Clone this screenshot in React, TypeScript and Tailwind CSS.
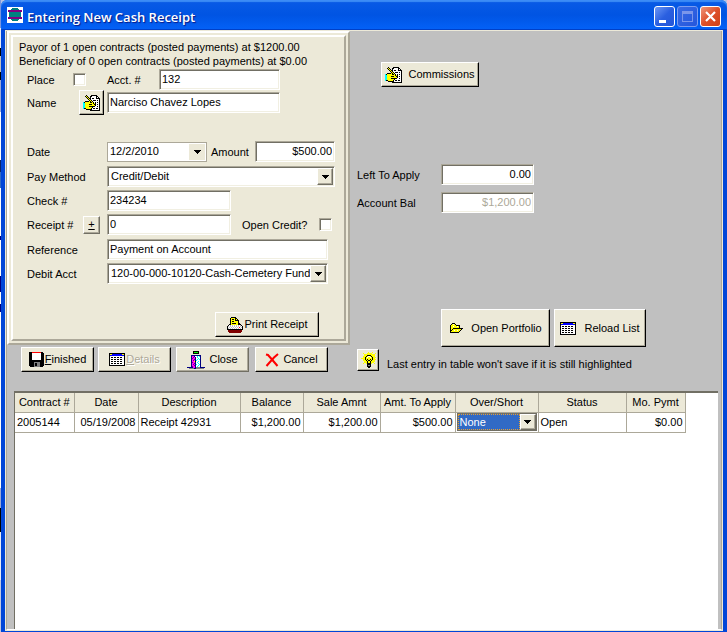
import { useState } from 'react'
import type { ReactNode } from 'react'
import clsx from 'clsx'

const raised = "border border-t-white border-l-white border-r-black border-b-black bg-[#ece9d8] shadow-[inset_-1px_-1px_0_#aca899]"
const raisedSoft = "border border-t-white border-l-white border-r-[#716f64] border-b-[#716f64] bg-[#ece9d8] shadow-[inset_-1px_-1px_0_#aca899]"
const sunken = "border border-t-[#aca899] border-l-[#aca899] border-r-white border-b-white bg-white shadow-[inset_1px_1px_0_#716f64,inset_-1px_-1px_0_#f1efe2]"

const colors: Record<string, string> = {
  k: "#000000",
  w: "#ffffff",
  y: "#ffff00",
  c: "#00ffff",
  g: "#c0c0c0",
  d: "#808080",
  r: "#ff0000",
  m: "#800000",
  b: "#0000ff",
  n: "#000080",
  f: "#ff00ff",
  p: "#800080",
  t: "#008080",
  l: "#00ff00",
}

const icons = {
  app: [
    "wwwwwwwwwwwwwwww",
    "wwwwwttttttwwwww",
    "wwwwttttttttwwww",
    "wppppppppppppppw",
    "wppppppppppppppw",
    "wwttttttttttttww",
    "wwttttttttttttww",
    "wwttttttttttttww",
    "wwttttttttttttww",
    "wwttttttttttttww",
    "wppppppppppppppw",
    "wppppppppppppppw",
    "wwwwttttttttwwww",
    "wwwwwttttttwwwww",
    "wwwwwwwwwwwwwwww",
    "wwwwwwwwwwwwwwww",
  ],
  hand: [
    "...k....kkkkkk...",
    "..kyk..kkwwwwkk..",
    "...kyk.kwwwwwkwk.",
    "....kykkwkkwwkkkk",
    ".....kykwwwwwwwwk",
    "......kykwkkkwkwk",
    "..kkkkykykwwwwwwk",
    "ckyyyyykkykwkwkwk",
    "ccyyyyyyyykykwwwk",
    "ccyyyykkkyykkwkwk",
    "ccyyyyyyyyyykwwwk",
    "ccyyyykkkkkkwwkwk",
    "ccyyyyyyykwwwwwwk",
    "ckkyyyyykwkkwkkwk",
    "...kkkkkkwwwwwwwk",
    ".......kkkkkkkkkk",
  ],
  printer: [
    "....kkkkk.......",
    "...kyyyykk......",
    "...kykkykyk.....",
    "...kyyyykkkk....",
    "...kykkyyyyk....",
    "...kyyyyyyyk....",
    "...kykkkkyykk...",
    "..kkyyyyyyykkk..",
    ".kwgwgwgwgwgwgk.",
    "kgwgwgwgwgwgwgwk",
    "kwgwgwgwgwgwrwgk",
    "kgwgwgwgwgwgwgwk",
    "kkkkkkkkkkkkkkkk",
    ".mmmmmmmmmmmmmm.",
    ".mmmmmmmmmmmmmm.",
    "..mmmmmmmmmmmm..",
  ],
  floppy: [
    "kkkrrrrrrrrrkk.",
    "kkkwwwwwwwwwkkk",
    "kkkwwwwwwwwwkkk",
    "kkkwwwwwwwwwkkk",
    "kkkwwwwwwwwwkkk",
    "kkkwwwwwwwwwkkk",
    "kkkwwwwwwwwwkkk",
    "kkkwwwwwwwwwkkk",
    "kkkkkkkkkkkkkkk",
    "kkkkkkkkkkkkkkk",
    "kkkkkddddddkkkk",
    "kkkkkdkkdddkkkk",
    "kkkkkdkkdddkkkk",
    "kkkkkdkkdddkkkk",
    ".kkkkddddddkkk.",
  ],
  sheet: [
    "kkkkkkkkkkkkkkkk",
    "kyybbbbbbbbbbyyk",
    "kbbbbbbbbbbbbbbk",
    "kwwwwwwwwwwwwwwk",
    "kwkkwkkwkkwkkwwk",
    "kwwwwwwwwwwwwwwk",
    "kwkkwkkwkkwkkwwk",
    "kwwwwwwwwwwwwwwk",
    "kwkkwkkwkkwkkwwk",
    "kwwwwwwwwwwwwwwk",
    "kwkkwkkwkkwkkwwk",
    "kwwwwwwwwwwwwwwk",
    "kkkkkkkkkkkkkkkk",
  ],
  door: [
    "......kkkkkk......",
    "......kllllk......",
    "......kkkkkk......",
    "..................",
    "....nnnnnnnnnn....",
    "....nffnwwcwcn....",
    "....nfpfnwcwwn....",
    "....npffnwwcwn....",
    "....nffpnwcwcn....",
    "....nfpfncwwwn....",
    "....nffykwwcwn....",
    "....npffnwcwwn....",
    "....nffpnwwcwn....",
    "....nfpfncwwcn....",
    "....nffpnwwcwn....",
    "....npffnwcwwn....",
    "nnnnnnffnddddnnnnn",
    "..dddddnndddddddd.",
  ],
  bulb: [
    ".......y...y...",
    "..y...yyyyy...y",
    "...yyyyyyyyyyy.",
    "...yyykkkkyyyy.",
    "..yyykywwykyyy.",
    "..yykywyywykyyy",
    "yyyykyyyyyykyy.",
    "..yykykyykykyyy",
    "..yyykykkykyyy.",
    "...yyykyykyyyy.",
    "...yyykyykyyy..",
    "..y..ykkkky..y.",
    "......kkkk.....",
    "......kddk.....",
    "......kkkk.....",
    ".......kk......",
  ],
  folder: [
    "...kkk........",
    "..kywyk.......",
    ".kyyyyykkkk...",
    ".kyywyyywyk...",
    ".kyyyyyyyyk...",
    ".kyykkkkkkkkkk",
    ".kykyyyyyyyyk.",
    ".kkyywyywyyk..",
    ".kyyyyyyyyk...",
    ".kkkkkkkkk....",
  ],
}

const PixelIcon = ({ name, className }: { name: keyof typeof icons; className?: string }) => {
  const rows = icons[name]
  const width = rows[0].length
  return (
    <svg
      width={width}
      height={rows.length}
      viewBox={`0 0 ${width} ${rows.length}`}
      shapeRendering="crispEdges"
      className={clsx("shrink-0", className)}
      aria-hidden="true"
    >
      {rows.map((row, y) =>
        row.split("").map((c, x) =>
          c === "." ? null : <rect key={`${x}-${y}`} x={x} y={y} width={1} height={1} fill={colors[c]} />
        )
      )}
    </svg>
  )
}

const CrossIcon = () => (
  <svg width="14" height="14" viewBox="0 0 14 14" className="shrink-0" fill="none" stroke="#ff0000" aria-hidden="true">
    <path d="M1 1.5 3 2 7 6.5 12.5 13" strokeWidth="2" />
    <path d="M13 1 9 4.5 5 9 1.5 13" strokeWidth="2" />
  </svg>
)

const ArrowButton = () => (
  <span className={clsx("pointer-events-none flex w-4 shrink-0 items-center justify-center", raisedSoft)} aria-hidden="true">
    <svg width="7" height="4" viewBox="0 0 7 4" shapeRendering="crispEdges">
      <path d="M0 0h7v1H6v1H5v1H4v1H3V3H2V2H1V1H0z" />
    </svg>
  </span>
)

const Button = ({ className, children, soft, ...rest }: { className?: string; children: ReactNode; soft?: boolean; disabled?: boolean; "aria-label"?: string }) => (
  <button type="button" className={clsx("flex shrink-0 items-center justify-center whitespace-nowrap", soft ? raisedSoft : raised, className)} {...rest}>
    {children}
  </button>
)

const Label = ({ htmlFor, className, children }: { htmlFor: string; className?: string; children: ReactNode }) => (
  <label htmlFor={htmlFor} className={clsx("shrink-0 pt-[2px] whitespace-nowrap", className)}>{children}</label>
)

const TextBox = ({ id, value, className, disabled }: { id: string; value: string; className?: string; disabled?: boolean }) => {
  const [text, setText] = useState(value)
  return (
    <input
      id={id}
      value={text}
      disabled={disabled}
      onChange={(e) => setText(e.target.value)}
      className={clsx("h-[21px] min-w-0 rounded-none px-[2px] pb-[2px] outline-none", sunken, className)}
    />
  )
}

const Select = ({ id, options, className }: { id: string; options: string[]; className?: string }) => (
  <div className={clsx("flex h-[21px] p-px", sunken, className)}>
    <select id={id} className="min-w-0 flex-1 appearance-none rounded-none bg-transparent pl-[2px] outline-none">
      {options.map((option) => (<option key={option}>{option}</option>))}
    </select>
    <ArrowButton />
  </div>
)

const CheckBox = ({ id }: { id: string }) => (
  <input id={id} type="checkbox" className={clsx("h-[13px] w-[13px] shrink-0 appearance-none", sunken)} />
)

const columns = [
  { label: "Contract #", width: "w-[59px]" },
  { label: "Date", width: "w-16" },
  { label: "Description", width: "w-[102px]" },
  { label: "Balance", width: "w-[63px]" },
  { label: "Sale Amnt", width: "w-[77px]" },
  { label: "Amt. To Apply", width: "w-[75px]" },
  { label: "Over/Short", width: "w-[83px]" },
  { label: "Status", width: "w-[88px]" },
  { label: "Mo. Pymt", width: "w-[59px]" },
]

// sliver of the window behind, seen along the left edge
const backdrop = [
  "h-7 bg-[#7a96df]",
  "h-5 bg-[#e8ecf8]",
  "h-2 bg-black",
  "h-4 bg-[#c0c0c0]",
  "h-2 bg-black",
  "h-8 bg-[#9aa8d8]",
  "h-12 bg-white",
  "h-3 bg-[#0a246a]",
  "h-4 bg-[#316ac5]",
  "h-12 bg-white",
  "h-1 bg-[#000080]",
  "h-9 bg-white",
  "h-4 bg-[#000080]",
  "h-3 bg-white",
  "h-2 bg-[#000080]",
  "h-44 bg-white",
  "h-5 bg-[#9aa8d8]",
  "h-6 bg-black",
  "h-12 bg-[#e8ecf8]",
  "flex-1 bg-[#c0c8e4]",
]

const TitleBar = () => (
  <header className="flex h-[30px] shrink-0 items-center rounded-t-md bg-linear-to-b from-[#0a5be6] via-[#0054e3] to-[#0462f8] px-[6px] shadow-[inset_0_2px_1px_#3c8cf6,inset_0_-1px_0_#0040c8]">
    <PixelIcon name="app" />
    <h1 className="ml-1 flex-1 pt-[3px] font-['Open_Sans',sans-serif] text-[13px] leading-4 font-semibold text-white [text-shadow:1px_1px_1px_#0a1883]">
      Entering New Cash Receipt
    </h1>
    <div className="flex gap-[2px] pt-[3px]">
      <button type="button" aria-label="Minimize" className="flex h-[21px] w-[21px] items-end rounded-[3px] border border-white bg-linear-to-br from-[#6c96f4] via-[#2a5fe0] to-[#2456d8] pb-[3px] pl-1">
        <span className="h-[3px] w-[7px] bg-white"></span>
      </button>
      <button type="button" aria-label="Maximize" disabled className="flex h-[21px] w-[21px] items-center justify-center rounded-[3px] border border-[#7b9cf0] bg-linear-to-br from-[#3a6ae4] to-[#2456dc]">
        <span className="h-[11px] w-[11px] border border-t-[3px] border-[#7b96ea]"></span>
      </button>
      <button type="button" aria-label="Close window" className="flex h-[21px] w-[21px] items-center justify-center rounded-[3px] border border-white bg-linear-to-br from-[#ee9378] via-[#dd5029] to-[#cf4014]">
        <svg width="11" height="11" viewBox="0 0 11 11" stroke="#ffffff" strokeWidth="2.2" aria-hidden="true">
          <path d="M1 1 10 10M10 1 1 10" />
        </svg>
      </button>
    </div>
  </header>
)

const PayorPanel = () => (
  <section className="w-[343px] shrink-0 border-2 border-t-white border-l-white border-r-[#aca899] border-b-[#aca899] bg-[#ece9d8] p-[2px]">
    <div className="flex flex-col border-2 border-t-white border-l-white border-r-[#aca899] border-b-[#aca899] pb-[2px]">
      <div className="pt-[3px] pl-[6px] leading-[14px] whitespace-nowrap">
        <p>Payor of 1 open contracts (posted payments) at $1200.00</p>
        <p>Beneficiary of 0 open contracts (posted payments) at $0.00</p>
      </div>
      <div className="flex flex-col pt-px pl-[14px]">
        <div className="flex h-[21px] items-center">
          <Label htmlFor="place" className="w-[46px]">Place</Label>
          <CheckBox id="place" />
          <Label htmlFor="acct" className="ml-[21px] w-[52px]">Acct. #</Label>
          <TextBox id="acct" value="132" className="w-[121px]" />
        </div>
        <div className="flex h-[25px] items-center">
          <Label htmlFor="name" className="w-[52px]">Name</Label>
          <Button aria-label="Edit name" className="h-[25px] w-[25px]"><PixelIcon name="hand" /></Button>
          <TextBox id="name" value="Narciso Chavez Lopes" className="ml-[3px] w-[173px]" />
        </div>
        <div className="mt-[26px] flex flex-col gap-1">
          <div className="flex h-[21px] items-center">
            <Label htmlFor="date" className="w-20">Date</Label>
            <div className="flex h-5 w-[100px] border border-[#aca899] bg-white p-px">
              <select id="date" className="min-w-0 flex-1 appearance-none bg-transparent pl-px outline-none">
                <option>12/2/2010</option>
              </select>
              <span className="pointer-events-none flex w-4 items-center justify-center bg-[#ece9d8]" aria-hidden="true">
                <svg width="7" height="4" viewBox="0 0 7 4" shapeRendering="crispEdges">
                  <path d="M0 0h7v1H6v1H5v1H4v1H3V3H2V2H1V1H0z" />
                </svg>
              </span>
            </div>
            <Label htmlFor="amount" className="ml-1 w-11">Amount</Label>
            <TextBox id="amount" value="$500.00" className="w-20 text-right" />
          </div>
          <div className="flex flex-col gap-[3px]">
            <div className="flex h-[21px] items-center">
              <Label htmlFor="method" className="w-20">Pay Method</Label>
              <Select id="method" options={["Credit/Debit", "Cash", "Check"]} className="w-[228px]" />
            </div>
            <div className="flex h-[21px] items-center">
              <Label htmlFor="check" className="w-20">Check #</Label>
              <TextBox id="check" value="234234" className="w-[124px]" />
            </div>
            <div className="flex h-[21px] items-center">
              <Label htmlFor="receipt" className="w-14">Receipt #</Label>
              <Button soft aria-label="Change sign" className="h-[18px] w-[17px]"><span className="underline">+</span></Button>
              <TextBox id="receipt" value="0" className="ml-[7px] w-[124px]" />
              <Label htmlFor="credit" className="ml-[11px] w-[77px]">Open Credit?</Label>
              <CheckBox id="credit" />
            </div>
          </div>
          <div className="flex flex-col gap-[3px]">
            <div className="flex h-[21px] items-center">
              <Label htmlFor="reference" className="w-20">Reference</Label>
              <TextBox id="reference" value="Payment on Account" className="w-[221px]" />
            </div>
            <div className="flex h-[21px] items-center">
              <Label htmlFor="debit" className="w-20">Debit Acct</Label>
              <Select id="debit" options={["120-00-000-10120-Cash-Cemetery Fund"]} className="w-[221px]" />
            </div>
          </div>
        </div>
        <Button className="mt-7 ml-[188px] h-[25px] w-[104px] gap-[2px]">
          <PixelIcon name="printer" />
          Print Receipt
        </Button>
      </div>
    </div>
  </section>
)

const SidePanel = () => (
  <section className="flex flex-1 flex-col pl-[7px]">
    <Button className="mt-[31px] ml-6 h-[25px] w-[98px] gap-[6px]">
      <PixelIcon name="hand" />
      Commissions
    </Button>
    <div className="mt-[77px] flex flex-col gap-[7px]">
      <div className="flex h-[21px] items-center">
        <Label htmlFor="left" className="w-[84px]">Left To Apply</Label>
        <TextBox id="left" value="0.00" className="w-[93px] text-right" />
      </div>
      <div className="flex h-[21px] items-center">
        <Label htmlFor="balance" className="w-[84px]">Account Bal</Label>
        <TextBox id="balance" value="$1,200.00" disabled className="w-[93px] text-right text-[#aca899]" />
      </div>
    </div>
    <div className="mt-24 ml-[84px] flex gap-1">
      <Button className="h-[38px] w-[109px] gap-2">
        <PixelIcon name="folder" />
        Open Portfolio
      </Button>
      <Button className="h-[38px] w-[92px] gap-2">
        <PixelIcon name="sheet" />
        Reload List
      </Button>
    </div>
  </section>
)

const ContractTable = () => (
  <div className="flex-1 border-t-2 border-l border-t-[#716f64] border-l-[#716f64] bg-white">
    <table className="table-fixed border-collapse">
      <thead>
        <tr className="h-[19px] bg-[#ece9d8]">
          {columns.map((column) => (
            <th key={column.label} className={clsx("overflow-hidden border-r border-b border-[#aca899] p-0 font-normal whitespace-nowrap", column.width)}>
              {column.label}
            </th>
          ))}
        </tr>
      </thead>
      <tbody>
        <tr className="h-5 whitespace-nowrap *:border-r *:border-b *:border-[#aca899] *:px-[2px] *:py-0">
          <td>2005144</td>
          <td className="text-right">05/19/2008</td>
          <td>Receipt 42931</td>
          <td className="text-right">$1,200.00</td>
          <td className="text-right">$1,200.00</td>
          <td className="text-right">$500.00</td>
          <td>
            <div className="-mx-px flex h-[18px] border border-[#716f64] bg-white">
              <select aria-label="Over/Short" className="min-w-0 flex-1 appearance-none rounded-none border border-dotted border-[#e8a030] bg-[#316ac5] pl-px text-white outline-none">
                <option>None</option>
                <option>Over</option>
                <option>Short</option>
              </select>
              <ArrowButton />
            </div>
          </td>
          <td>Open</td>
          <td className="text-right">$0.00</td>
        </tr>
      </tbody>
    </table>
  </div>
)

export default function App() {
  return (
    <div className="flex min-h-screen bg-[#b9c4e4] font-['Liberation_Sans',Arial,sans-serif] text-[11px] leading-[13px] text-black">
      <div className="flex w-px shrink-0 flex-col">
        {backdrop.map((band, i) => (<span key={i} className={band}></span>))}
      </div>
      <main className="flex flex-1 flex-col rounded-t-lg bg-[#0046d8]">
        <TitleBar />
        <div className="mr-1 mb-px ml-1 flex flex-1 flex-col border border-[#ece9d8] bg-[#c0c0c0]">
          <div className="flex flex-1 flex-col border border-t-0 border-[#aca899] border-b-white">
            <div className="flex items-start">
              <PayorPanel />
              <SidePanel />
            </div>
            <div className="flex h-[25px] items-center pl-[14px]">
              <Button className="h-[25px] w-[73px] gap-px">
                <PixelIcon name="floppy" />
                <span><span className="underline">F</span>inished</span>
              </Button>
              <Button disabled className="ml-1 h-[25px] w-[73px] gap-px text-[#aca899] [text-shadow:1px_1px_0_#ffffff]">
                <PixelIcon name="sheet" />
                <span><span className="underline">D</span>etails</span>
              </Button>
              <Button soft className="ml-[5px] h-[25px] w-[73px] gap-1">
                <PixelIcon name="door" />
                Close
              </Button>
              <Button className="ml-[6px] h-[25px] w-[73px] gap-1">
                <CrossIcon />
                Cancel
              </Button>
              <Button aria-label="Hint" className="ml-[29px] h-[22px] w-[22px]"><PixelIcon name="bulb" /></Button>
              <p className="ml-2 pt-[10px] whitespace-nowrap">Last entry in table won't save if it is still highlighted</p>
            </div>
            <div className="mt-[19px] flex flex-1 pr-[3px] pl-[7px]">
              <ContractTable />
            </div>
          </div>
        </div>
      </main>
    </div>
  )
}
